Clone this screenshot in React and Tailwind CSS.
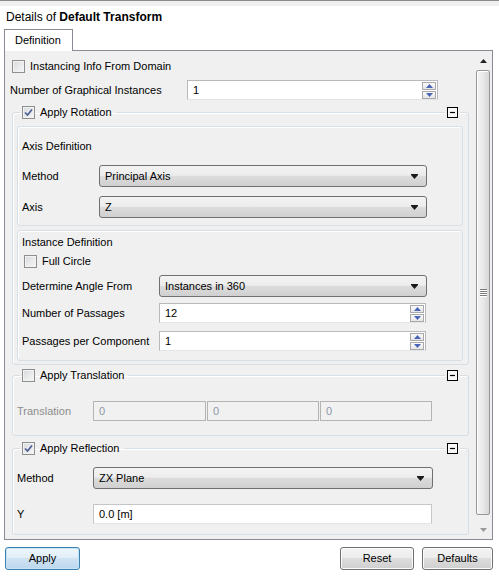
import React from 'react'

const groupBox = 'rounded-[3px] border border-[#d5dfe5] shadow-[inset_1px_1px_0_#ffffff]'

function CheckBox({ checked }) {
  return (
    <span className="flex h-[13px] w-[13px] shrink-0 items-center justify-center border border-[#8e8f8f] bg-[linear-gradient(135deg,#d8dadd,#f7f7f7)] shadow-[inset_0_0_0_1px_#f2f2f2]">
      {checked && (
        <svg width="9" height="9" viewBox="0 0 9 9">
          <path d="M1 4.5 L3.5 7 L8 1.5" fill="none" stroke="#4b5f96" strokeWidth="1.7" />
        </svg>
      )}
    </span>
  )
}

function Collapse() {
  return (
    <span className="absolute right-[8px] top-[-12px] bg-[#f0f0f0] px-[2px]">
      <svg width="11" height="11" viewBox="0 0 11 11" className="block">
        <rect x="0.5" y="0.5" width="10" height="10" fill="#f7f7f7" stroke="#000" />
        <path d="M3 5.5 H8" stroke="#000" strokeWidth="1.2" />
      </svg>
    </span>
  )
}

function ComboBox({ value, className }) {
  return (
    <div
      className={
        'flex h-[22px] items-center justify-between rounded-[3px] border border-[#707070] bg-[linear-gradient(#f3f3f3_0%,#ececec_47%,#dcdcdc_50%,#d0d0d0_100%)] pl-[5px] pr-[8px] ' +
        className
      }
    >
      <span>{value}</span>
      <svg width="7" height="5" viewBox="0 0 7 5">
        <path d="M0 0 H7 V1 L3.5 5 L0 1 Z" fill="#1a1a1a" />
      </svg>
    </div>
  )
}

function SpinArrow({ up }) {
  return (
    <span className="flex h-[8px] w-[14px] items-center justify-center border border-[#a9a9a9] bg-[linear-gradient(#fafafa,#e6e6e6)]">
      <svg width="7" height="4" viewBox="0 0 7 4">
        <path d={up ? 'M0 4 L3.5 0 L7 4 Z' : 'M0 0 L7 0 L3.5 4 Z'} fill="#4a64b8" />
      </svg>
    </span>
  )
}

function SpinInput({ value, className }) {
  return (
    <div
      className={
        'flex h-[20px] items-center justify-between border border-[#b7b9bd] border-b-[#e1e4e8] bg-white pl-[5px] pr-[1px] ' +
        className
      }
    >
      <span>{value}</span>
      <span className="flex flex-col gap-px">
        <SpinArrow up />
        <SpinArrow />
      </span>
    </div>
  )
}

function TextInput({ value, className, disabled }) {
  return (
    <div
      className={
        'flex h-[20px] items-center border pl-[5px] ' +
        (disabled
          ? 'border-[#b4b4b4] bg-[#f1f1f1] text-[#8d96a8] '
          : 'border-[#c4c6ca] border-b-[#e3e6ea] bg-white ') +
        className
      }
    >
      {value}
    </div>
  )
}

function Group({ label, checked, className, children }) {
  return (
    <fieldset className={'relative ml-[7px] w-[457px] pl-[4px] pr-[5px] ' + groupBox + ' ' + className}>
      <legend className="ml-[3px] flex items-center gap-[5px] px-[2px]">
        <CheckBox checked={checked} />
        <span className="pr-[2px]">{label}</span>
      </legend>
      <Collapse />
      {children}
    </fieldset>
  )
}

function Button({ children, primary, className }) {
  return (
    <button
      className={
        'flex h-[23px] items-center justify-center rounded-[3px] border ' +
        (primary
          ? 'border-[#3c7fb1] bg-[linear-gradient(#eef6fc_0%,#e1eef8_47%,#cfe3f3_50%,#bcd7ee_100%)] shadow-[inset_0_0_0_1px_#c7e4f7] '
          : 'border-[#707070] bg-[linear-gradient(#f3f3f3_0%,#ececec_47%,#dddddd_50%,#cfcfcf_100%)] shadow-[inset_0_0_0_1px_#fbfbfb] ') +
        className
      }
    >
      {children}
    </button>
  )
}

function ScrollBar() {
  return (
    <div className="flex w-[17px] flex-col bg-[#f0f0f0]">
      <div className="flex h-[17px] items-center justify-center pt-[2px]">
        <svg width="7" height="4" viewBox="0 0 7 4">
          <path d="M0 4 L3.5 0 L7 4 Z" fill="#222" />
        </svg>
      </div>
      <div className="mb-[7px] ml-[1px] mr-[2px] mt-[2px] flex flex-1 items-center justify-center rounded-[2px] border border-[#979797] bg-[linear-gradient(90deg,#f4f4f4_0%,#e9e9e9_50%,#d6d6d6_100%)] shadow-[inset_1px_1px_0_#ffffff]">
        <div className="flex flex-col gap-[1px]">
          {[0, 1, 2, 3].map((i) => (
            <span key={i} className="block h-[1px] w-[7px] bg-[#7d7d7d] shadow-[0_1px_0_#ffffff]" />
          ))}
        </div>
      </div>
      <div className="flex h-[17px] items-center justify-center pb-[2px]">
        <svg width="7" height="4" viewBox="0 0 7 4">
          <path d="M0 0 L7 0 L3.5 4 Z" fill="#9a9a9a" />
        </svg>
      </div>
    </div>
  )
}

export default function App() {
  return (
    <div className="h-[577px] w-[499px] overflow-hidden bg-white font-['Liberation_Sans',Arial,sans-serif] text-[11px] leading-[13px] text-black">
      <div className="h-[6px] border-t border-[#8c8c8c] bg-[#f0f0f0]" />
      <div className="flex h-[23px] items-center pl-[6px] text-[12px]">
        Details of&nbsp;<span className="font-bold">Default Transform</span>
      </div>

      <div className="relative z-10 -mb-px ml-[4px] flex h-[22px] w-[69px] items-center border border-b-0 border-[#898c95] bg-white pl-[10px]">
        Definition
      </div>

      <div className="ml-[4px] flex h-[490px] w-[489px] border border-[#898c95] bg-[#f0f0f0]">
        <div className="flex-1 overflow-hidden">
          <div className="flex items-center gap-[5px] pl-[7px] pt-[9px]">
            <CheckBox />
            <span>Instancing Info From Domain</span>
          </div>

          <div className="mt-[7px] flex items-center pl-[5px]">
            <span className="w-[177px]">Number of Graphical Instances</span>
            <SpinInput value="1" className="w-[251px]" />
          </div>

          <Group label="Apply Rotation" checked className="mt-[6px] pb-[3px]">
            <div className={'mt-[7px] h-[100px] px-[4px] pt-[13px] ' + groupBox}>
              <div>Axis Definition</div>
              <div className="mt-[12px] flex items-center">
                <span className="w-[77px]">Method</span>
                <ComboBox value="Principal Axis" className="w-[328px]" />
              </div>
              <div className="mt-[9px] flex items-center">
                <span className="w-[77px]">Axis</span>
                <ComboBox value="Z" className="w-[328px]" />
              </div>
            </div>

            <div className={'mt-[4px] h-[131px] px-[4px] pt-[5px] ' + groupBox}>
              <div>Instance Definition</div>
              <div className="mt-[6px] flex items-center gap-[5px] pl-[2px]">
                <CheckBox />
                <span>Full Circle</span>
              </div>
              <div className="mt-[7px] flex items-center">
                <span className="w-[137px]">Determine Angle From</span>
                <ComboBox value="Instances in 360" className="w-[268px]" />
              </div>
              <div className="mt-[6px] flex items-center">
                <span className="w-[137px]">Number of Passages</span>
                <SpinInput value="12" className="w-[267px]" />
              </div>
              <div className="mt-[8px] flex items-center">
                <span className="w-[137px]">Passages per Component</span>
                <SpinInput value="1" className="w-[267px]" />
              </div>
            </div>
          </Group>

          <Group label="Apply Translation" className="mt-[4px] pb-[14px]">
            <div className="mt-[19px] flex items-center">
              <span className="w-[76px] text-[#8d8d8d]">Translation</span>
              <div className="flex gap-[1px]">
                <TextInput disabled value="0" className="w-[113px]" />
                <TextInput disabled value="0" className="w-[112px]" />
                <TextInput disabled value="0" className="w-[112px]" />
              </div>
            </div>
          </Group>

          <Group label="Apply Reflection" checked className="mt-[6px] pb-[10px]">
            <div className="mt-[12px] flex items-center">
              <span className="w-[76px]">Method</span>
              <ComboBox value="ZX Plane" className="w-[340px]" />
            </div>
            <div className="mt-[15px] flex items-center">
              <span className="w-[76px]">Y</span>
              <TextInput value="0.0 [m]" className="w-[339px]" />
            </div>
          </Group>
        </div>
        <ScrollBar />
      </div>

      <div className="mt-[7px] flex items-center justify-between pl-[5px] pr-[6px]">
        <Button primary className="w-[75px]">
          Apply
        </Button>
        <div className="flex gap-[8px]">
          <Button className="w-[74px]">Reset</Button>
          <Button className="w-[71px]">Defaults</Button>
        </div>
      </div>
    </div>
  )
}
